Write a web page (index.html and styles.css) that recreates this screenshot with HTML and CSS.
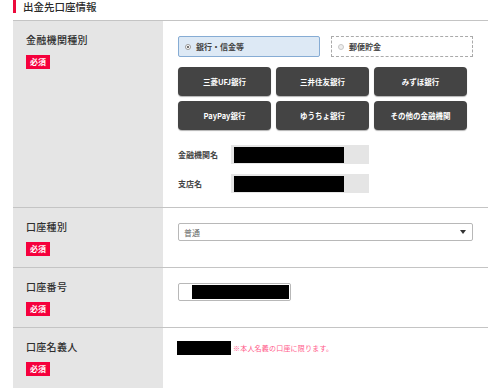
FILE: index.html
```html
<!DOCTYPE html>
<html lang="ja">
<head>
<meta charset="utf-8">
<link rel="stylesheet" href="styles.css">
</head>
<body>
<div class="wrap">
  <div class="head"><h2 class="title">出金先口座情報</h2></div>
  <div class="row row-1">
    <div class="lab"><div class="lab-text">金融機関種別</div><span class="req">必須</span></div>
    <div class="val">
      <div class="radios">
        <div class="radio radio-on"><span class="dot dot-on"></span>銀行・信金等</div>
        <div class="radio radio-off"><span class="dot"></span>郵便貯金</div>
      </div>
      <div class="banks">
        <div class="bank">三菱UFJ銀行</div>
        <div class="bank">三井住友銀行</div>
        <div class="bank">みずほ銀行</div>
        <div class="bank">PayPay銀行</div>
        <div class="bank">ゆうちょ銀行</div>
        <div class="bank">その他の金融機関</div>
      </div>
      <div class="fields">
        <div class="field"><span class="f-lab">金融機関名</span><span class="f-box"><span class="mask"></span></span></div>
        <div class="field"><span class="f-lab">支店名</span><span class="f-box"><span class="mask"></span></span></div>
      </div>
    </div>
  </div>
  <div class="row">
    <div class="lab"><div class="lab-text">口座種別</div><span class="req">必須</span></div>
    <div class="val">
      <div class="select"><span>普通</span><span class="arrow"></span></div>
    </div>
  </div>
  <div class="row">
    <div class="lab"><div class="lab-text">口座番号</div><span class="req">必須</span></div>
    <div class="val">
      <div class="input"><span class="mask mask-num"></span></div>
    </div>
  </div>
  <div class="row row-last">
    <div class="lab"><div class="lab-text">口座名義人</div><span class="req">必須</span></div>
    <div class="val val-name">
      <span class="mask mask-name"></span><span class="note">※本人名義の口座に限ります。</span>
    </div>
  </div>
</div>
</body>
</html>
```
FILE: styles.css
```css
* { box-sizing: border-box; }
html, body { margin: 0; padding: 0; background: #fff; }
body {
  font-family: "Noto Sans CJK JP", "Noto Sans", sans-serif;
  color: #333;
  overflow: hidden;
}
.wrap { margin-left: 13px; width: 475px; }
.head {
  height: 21px;
  border-bottom: 1px solid #c4c4c4;
}
.title {
  margin: 0;
  height: 13px;
  border-left: 3px solid #ec0a3c;
  padding-left: 7px;
  font-size: 10.5px;
  line-height: 13px;
  font-weight: 500;
  color: #2a2a2a;
}
.row {
  display: grid;
  grid-template-columns: 150px 325px;
  border-bottom: 1px solid #c4c4c4;
  height: 60px;
}
.row-1 { height: 187px; }
.row-last { border-bottom: 0; height: 70px; }
.lab {
  background: #e5e5e5;
  padding: 13px 13px 0;
}
.lab-text {
  font-size: 10px;
  line-height: 12px;
  font-weight: 500;
  color: #2e2e2e;
  letter-spacing: 0.3px;
}
.req {
  display: inline-block;
  margin-top: 7px;
  width: 24px;
  height: 14px;
  background: #f5003c;
  color: #fff;
  font-size: 8px;
  line-height: 14px;
  text-align: center;
  font-weight: 700;
}
.val { padding: 15px 0 0 15px; }
.radios { display: flex; gap: 11px; }
.radio {
  width: 142px;
  height: 21px;
  display: flex;
  align-items: center;
  padding-left: 6px;
  font-size: 8px;
  font-weight: 700;
  color: #444;
}
.radio-on { background: #dde9f5; border: 1px solid #86acd4; border-radius: 2px; }
.radio-off { border: 1px dashed #aaa; }
.dot {
  width: 6px; height: 6px;
  border-radius: 50%;
  border: 1px solid #c8c8c8;
  background: #eee;
  margin-right: 5px;
  position: relative;
}
.dot-on { border-color: #999; background: #fff; }
.dot-on::after {
  content: "";
  position: absolute;
  left: 1px; top: 1px;
  width: 2px; height: 2px;
  border-radius: 50%;
  background: #444;
}
.banks {
  margin-top: 10px;
  display: grid;
  grid-template-columns: repeat(3, 93px);
  grid-auto-rows: 29px;
  gap: 5px;
}
.bank {
  background: #444;
  border-radius: 4px;
  color: #fff;
  font-size: 7.5px;
  font-weight: 700;
  display: flex;
  align-items: center;
  justify-content: center;
  box-shadow: 0 1px 1px rgba(0,0,0,0.3);
}
.fields { margin-top: 15px; display: flex; flex-direction: column; gap: 10px; }
.field { display: flex; align-items: center; height: 19px; }
.f-lab { width: 53px; font-size: 8px; font-weight: 700; color: #444; }
.f-box {
  width: 138px; height: 19px;
  background: #e5e5e5;
  padding: 2px 0 1px 3px;
  display: flex;
}
.f-box .mask { width: 110px; height: 16px; }
.mask { display: block; background: #000; }
.select {
  width: 295px; height: 18px;
  border: 1px solid #b8b8b8;
  border-radius: 2px;
  display: flex;
  align-items: center;
  justify-content: space-between;
  padding: 0 6px 0 5px;
  font-size: 8px;
  color: #666;
}
.arrow {
  width: 0; height: 0;
  border-left: 3px solid transparent;
  border-right: 3px solid transparent;
  border-top: 4px solid #333;
}
.input {
  width: 113px; height: 18px;
  border: 1px solid #b8b8b8;
  border-radius: 2px;
  padding: 1px 1px 1px 13px;
  display: flex;
}
.mask-num { width: 97px; height: 14px; }
.val-name { padding-top: 13px; padding-left: 14px; display: flex; align-items: center; height: 27px; }
.mask-name { width: 54px; height: 14px; }
.note { font-size: 7px; color: #ff5a8a; margin-left: 2px; letter-spacing: 0.2px; }
```
